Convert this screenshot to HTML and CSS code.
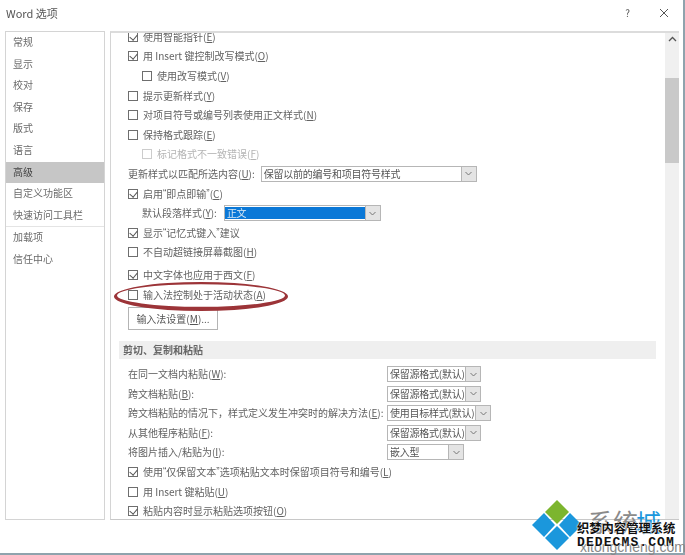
FILE: index.html
```html
<!DOCTYPE html>
<html lang="zh">
<head>
<meta charset="utf-8">
<title>Word 选项</title>
<link rel="stylesheet" href="styles.css">
</head>
<body>
<div class="window">
  <header class="titlebar">
    <span class="title">Word 选项</span>
    <span class="help">?</span>
    <svg class="close" width="10" height="10" viewBox="0 0 10 10"><path d="M1 1L9 9M9 1L1 9" stroke="#555" stroke-width="1" fill="none"/></svg>
  </header>
  <div class="body">
    <nav class="side">
      <div class="nav-group">
        <div class="nav">常规</div>
        <div class="nav">显示</div>
        <div class="nav">校对</div>
        <div class="nav">保存</div>
        <div class="nav">版式</div>
        <div class="nav">语言</div>
        <div class="nav active">高级</div>
        <div class="nav">自定义功能区</div>
        <div class="nav">快速访问工具栏</div>
      </div>
      <div class="nav-group">
        <div class="nav">加载项</div>
        <div class="nav">信任中心</div>
      </div>
    </nav>
    <main class="panel">
      <div class="content">
        <div class="row first"><span class="cb on"></span>使用智能指针(<u>E</u>)</div>
        <div class="row"><span class="cb on"></span>用 Insert 键控制改写模式(<u>O</u>)</div>
        <div class="row sub"><span class="cb"></span>使用改写模式(<u>V</u>)</div>
        <div class="row"><span class="cb"></span>提示更新样式(<u>Y</u>)</div>
        <div class="row"><span class="cb"></span>对项目符号或编号列表使用正文样式(<u>N</u>)</div>
        <div class="row"><span class="cb"></span>保持格式跟踪(<u>E</u>)</div>
        <div class="row sub disabled"><span class="cb"></span>标记格式不一致错误(<u>F</u>)</div>
        <div class="row">更新样式以匹配所选内容(<u>U</u>):<span class="select s-update"><span class="val">保留以前的编号和项目符号样式</span><span class="arrow"><svg width="7" height="5" viewBox="0 0 7 5"><path d="M.5 1L3.5 4L6.5 1" stroke="#777" fill="none"/></svg></span></span></div>
        <div class="row"><span class="cb on"></span>启用<span class="q">“</span>即点即输<span class="q">”</span>(<u>C</u>)</div>
        <div class="row sub-label">默认段落样式(<u>Y</u>):<span class="select s-para"><span class="val selected">正文</span><span class="arrow"><svg width="7" height="5" viewBox="0 0 7 5"><path d="M.5 1L3.5 4L6.5 1" stroke="#777" fill="none"/></svg></span></span></div>
        <div class="row"><span class="cb on"></span>显示<span class="q">“</span>记忆式键入<span class="q">”</span>建议</div>
        <div class="row"><span class="cb"></span>不自动超链接屏幕截图(<u>H</u>)</div>
        <div class="row gap-top"><span class="cb on"></span>中文字体也应用于西文(<u>F</u>)</div>
        <div class="row"><span class="cb"></span>输入法控制处于活动状态(<u>A</u>)</div>
        <button class="btn">输入法设置(<u>M</u>)...</button>
        <div class="section">剪切、复制和粘贴</div>
        <div class="row">在同一文档内粘贴(<u>W</u>):<span class="select s-paste"><span class="val">保留源格式(默认)</span><span class="arrow"><svg width="7" height="5" viewBox="0 0 7 5"><path d="M.5 1L3.5 4L6.5 1" stroke="#777" fill="none"/></svg></span></span></div>
        <div class="row">跨文档粘贴(<u>B</u>):<span class="select s-paste"><span class="val">保留源格式(默认)</span><span class="arrow"><svg width="7" height="5" viewBox="0 0 7 5"><path d="M.5 1L3.5 4L6.5 1" stroke="#777" fill="none"/></svg></span></span></div>
        <div class="row">跨文档粘贴的情况下，样式定义发生冲突时的解决方法(<u>E</u>):<span class="select s-paste s-wide"><span class="val">使用目标样式(默认)</span><span class="arrow"><svg width="7" height="5" viewBox="0 0 7 5"><path d="M.5 1L3.5 4L6.5 1" stroke="#777" fill="none"/></svg></span></span></div>
        <div class="row">从其他程序粘贴(<u>F</u>):<span class="select s-paste"><span class="val">保留源格式(默认)</span><span class="arrow"><svg width="7" height="5" viewBox="0 0 7 5"><path d="M.5 1L3.5 4L6.5 1" stroke="#777" fill="none"/></svg></span></span></div>
        <div class="row">将图片插入/粘贴为(<u>I</u>):<span class="select s-paste s-narrow"><span class="val">嵌入型</span><span class="arrow"><svg width="7" height="5" viewBox="0 0 7 5"><path d="M.5 1L3.5 4L6.5 1" stroke="#777" fill="none"/></svg></span></span></div>
        <div class="row"><span class="cb on"></span>使用<span class="q">“</span>仅保留文本<span class="q">”</span>选项粘贴文本时保留项目符号和编号(<u>L</u>)</div>
        <div class="row"><span class="cb"></span>用 Insert 键粘贴(<u>U</u>)</div>
        <div class="row"><span class="cb on"></span>粘贴内容时显示粘贴选项按钮(<u>O</u>)</div>
      </div>
      <div class="scrollbar">
        <svg class="up" width="9" height="6" viewBox="0 0 9 6"><path d="M1 5L4.500 1.500L8 5" stroke="#555" stroke-width="1.300" fill="none"/></svg>
        <div class="thumb"></div>
      </div>
    </main>
  </div>
</div>
<svg class="ellipse" width="176" height="32" viewBox="0 0 176 32"><path fill-rule="evenodd" fill="#9c3438" d="M1 15.500A87 14.500 0 1 0 175 15.500A87 14.500 0 1 0 1 15.500ZM4 14.500A84 11.300 0 1 1 172 14.500A84 11.300 0 1 1 4 14.500Z"/></svg>
<div class="mark">
  <svg class="mark-logo" width="50" height="50" viewBox="0 0 50 50">
    <path d="M25 0L37 12L25 24L13 12Z" fill="#7cb52e"/>
    <path d="M12 13L23 25L12 37L0 25Z" fill="#1b97dc"/>
    <path d="M38 13L50 25L38 37L27 25Z" fill="#1b97dc"/>
    <path d="M25 26L37 38L25 50L13 38Z" fill="#1b97dc"/>
  </svg>
  <span class="mark-a">系统</span><span class="mark-b">城</span>
  <span class="mark-e">xitongcheng.com</span>
  <span class="mark-c">织梦内容管理系统</span>
  <span class="mark-d">DEDECMS.COM</span>
</div>
</body>
</html>
```
FILE: styles.css
```css
* { box-sizing: border-box; }
html, body { margin: 0; padding: 0; }
body {
  width: 685px;
  height: 555px;
  overflow: hidden;
  position: relative;
  background: #fff;
  font-family: "Noto Sans CJK SC", "Noto Sans", sans-serif;
  font-size: 10px;
  color: #626262;
}
.window {
  width: 685px;
  height: 555px;
  border-right: 2px solid #8fa3ad;
  border-bottom: 2px solid #8fa3ad;
  padding-right: 4px;
  background: #fff;
  filter: blur(0.4px);
}
.titlebar {
  height: 31px;
  display: flex;
  align-items: center;
  padding: 0 9px 6px 6px;
}
.title { font-size: 11px; color: #555; flex: 1; }
.help { font-size: 10px; margin-right: 29px; color: #555; }
.close { display: block; margin-right: 1px; }
.body {
  display: flex;
  gap: 5px;
  padding-left: 5px;
  height: 489px;
}
.side {
  width: 100px;
  border: 1px solid #d4d4d4;
  background: #fff;
}
.nav-group + .nav-group { border-top: 1px solid #e4e4e4; }
.nav {
  height: 21.600px;
  line-height: 20px;
  padding-left: 7px;
  font-size: 10px;
  color: #6a6a6a;
}
.active { background: #c6c6c6; color: #444; }
.panel {
  flex: 1;
  display: flex;
  border-top: 2px solid #dcdcdc;
  border-left: 1px solid #d4d4d4;
  border-bottom: 1px solid #c8c8c8;
  overflow: hidden;
  min-width: 0;
}
.content {
  flex: 1;
  min-width: 0;
  padding: 0 0 0 17px;
  display: flex;
  flex-direction: column;
  overflow: hidden;
}
.row {
  flex: none;
  height: 19.600px;
  display: flex;
  align-items: center;
  white-space: pre;
  line-height: 1;
}
.row u { text-underline-offset: 1px; }
.q { font-family: "Liberation Sans", sans-serif; }
.first { margin-top: -6px; }
.gap-top { margin-top: 3px; }
.sub { padding-left: 14px; }
.sub-label { padding-left: 14px; }
.disabled { color: #b4b4b4; }
.disabled .cb { border-color: #ccc; }
.cb {
  flex: none;
  width: 10px;
  height: 10px;
  border: 1px solid #6e6e6e;
  margin-right: 5px;
  position: relative;
  background: #fff;
}
.on::after {
  content: "";
  position: absolute;
  left: 2px;
  top: 0;
  width: 4px;
  height: 6px;
  border-right: 1.200px solid #555;
  border-bottom: 1.200px solid #555;
  transform: rotate(40deg);
}
.select {
  flex: none;
  display: flex;
  align-items: stretch;
  height: 16px;
  border: 1px solid #b6b6b6;
  color: #555;
  background: #fff;
}
.val {
  flex: 1;
  display: flex;
  align-items: center;
  padding-left: 2px;
  min-width: 0;
  letter-spacing: -0.250px;
}
.arrow {
  flex: none;
  width: 15px;
  background: #e4e4e4;
  border-left: 1px solid #b6b6b6;
  display: flex;
  align-items: center;
  justify-content: center;
}
.s-update { width: 216px; margin-left: 6px; }
.s-para { width: 157px; margin-left: 7px; }
.selected {
  background: #0a78d7;
  color: #d8e8f4;
  margin: 1px 0;
}
.s-paste { width: 94px; margin-left: auto; margin-right: 184px; }
.s-wide { width: 104px; margin-right: 174px; }
.s-narrow { width: 77px; margin-right: 201px; }
.btn {
  flex: none;
  width: 90px;
  height: 23px;
  margin: 3px 0 0;
  padding: 0;
  border: 1px solid #b4b4b4;
  background: #fff;
  color: #555;
  font: inherit;
}
.section {
  flex: none;
  height: 18px;
  margin: 11px 9px 5px -9px;
  padding-left: 4px;
  background: #efefef;
  font-weight: 700;
  line-height: 18px;
  color: #666;
}
.scrollbar {
  flex: none;
  width: 14px;
  background: #f0f0f0;
  position: relative;
  padding-top: 3px;
  display: flex;
  flex-direction: column;
  align-items: center;
}
.up { display: block; }
.thumb {
  width: 100%;
  height: 85px;
  margin-top: 36px;
  background: #c9c9c9;
}
.ellipse { position: absolute; left: 113px; top: 281px; }
.mark { position: absolute; left: 532px; top: 500px; width: 153px; height: 55px; overflow: hidden; }
.mark-logo { position: absolute; left: 0; top: 0; }
.mark-a { position: absolute; left: 56px; top: 6px; font-size: 25px; line-height: 30px; color: #8a8a8a; }
.mark-b { position: absolute; left: 104px; top: 6px; font-size: 25px; line-height: 30px; color: #1b97dc; }
.mark-c { position: absolute; left: 45px; top: 21px; font-size: 12.300px; line-height: 15px; font-weight: 700; color: #111; text-shadow: 0 0 1px #fff, 0 0 2px #fff; }
.mark-d { position: absolute; left: 45px; top: 36px; font-family: "Liberation Mono", monospace; font-size: 13px; line-height: 14px; font-weight: 700; letter-spacing: 1.100px; color: #111; text-shadow: 0 0 1px #fff, 0 0 2px #fff; }
.mark-e { position: absolute; left: 48px; top: 40px; font-family: "Liberation Sans", sans-serif; font-size: 14px; line-height: 15px; color: #888; }
```
